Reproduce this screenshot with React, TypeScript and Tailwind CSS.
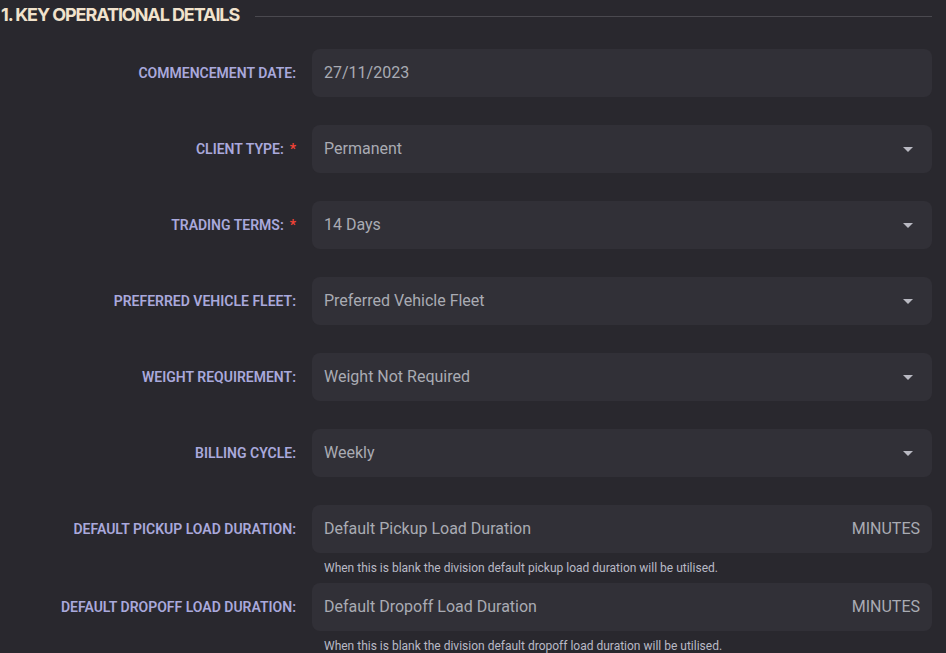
const rows = [
  { label: "COMMENCEMENT DATE:", value: "27/11/2023" },
  { label: "CLIENT TYPE:", value: "Permanent", req: true, select: true },
  { label: "TRADING TERMS:", value: "14 Days", req: true, select: true },
  { label: "PREFERRED VEHICLE FLEET:", value: "Preferred Vehicle Fleet", select: true },
  { label: "WEIGHT REQUIREMENT:", value: "Weight Not Required", select: true },
  { label: "BILLING CYCLE:", value: "Weekly", select: true },
];

const durations = [
  { label: "DEFAULT PICKUP LOAD DURATION:", value: "Default Pickup Load Duration", help: "When this is blank the division default pickup load duration will be utilised." },
  { label: "DEFAULT DROPOFF LOAD DURATION:", value: "Default Dropoff Load Duration", help: "When this is blank the division default dropoff load duration will be utilised." },
];

function Label({ text, req }: { text: string; req?: boolean }) {
  return (
    <div className="w-[296px] shrink-0 text-right text-sm font-semibold leading-[16px] text-[#a9a9dc] flex justify-end">
      <span>{text}</span>
      {req && <span className="ml-[6px] text-[#f44336]">*</span>}
    </div>
  );
}

function Field({ value, select, suffix }: { value: string; select?: boolean; suffix?: string }) {
  return (
    <div className="ml-4 w-[620px] h-12 rounded-lg bg-[#313037] flex items-center justify-between pl-3 pr-3 text-base text-[#a9abb3]">
      <span>{value}</span>
      {select && (
        <svg width="24" height="24" viewBox="0 0 24 24" className="-mr-[1px] fill-[#b9b9c2]">
          <path d="M6 10l5 5 5-5z" />
        </svg>
      )}
      {suffix && <span>{suffix}</span>}
    </div>
  );
}

export default function App() {
  return (
    <div className="h-[653px] w-[946px] overflow-hidden bg-[#29282e] font-['Roboto',sans-serif]">
      <div className="flex h-[29px] items-center pl-[1px] pr-[14px]">
        <h2 className="font-['Inter',sans-serif] text-[18px] leading-[30px] font-bold tracking-[-1.08px] text-[#f0e2cc] whitespace-nowrap">
          1. KEY OPERATIONAL DETAILS
        </h2>
        <div className="ml-4 h-px flex-1 bg-[#4a494f] mt-[4px]" />
      </div>
      <div className="mt-5 flex flex-col gap-7">
        {rows.map((r) => (
          <div key={r.label} className="flex items-center">
            <Label text={r.label} req={r.req} />
            <Field value={r.value} select={r.select} />
          </div>
        ))}
        <div className="flex flex-col">
          <div className="flex items-center">
            <Label text={durations[0].label} />
            <Field value={durations[0].value} suffix="MINUTES" />
          </div>
          <p className="ml-[324px] h-[30px] pt-[8px] text-xs leading-[15px] text-[#b9bac6]">{durations[0].help}</p>
          <div className="flex items-center">
            <Label text={durations[1].label} />
            <Field value={durations[1].value} suffix="MINUTES" />
          </div>
          <p className="ml-[324px] pt-[8px] text-xs leading-[15px] text-[#b9bac6]">{durations[1].help}</p>
        </div>
      </div>
    </div>
  );
}
